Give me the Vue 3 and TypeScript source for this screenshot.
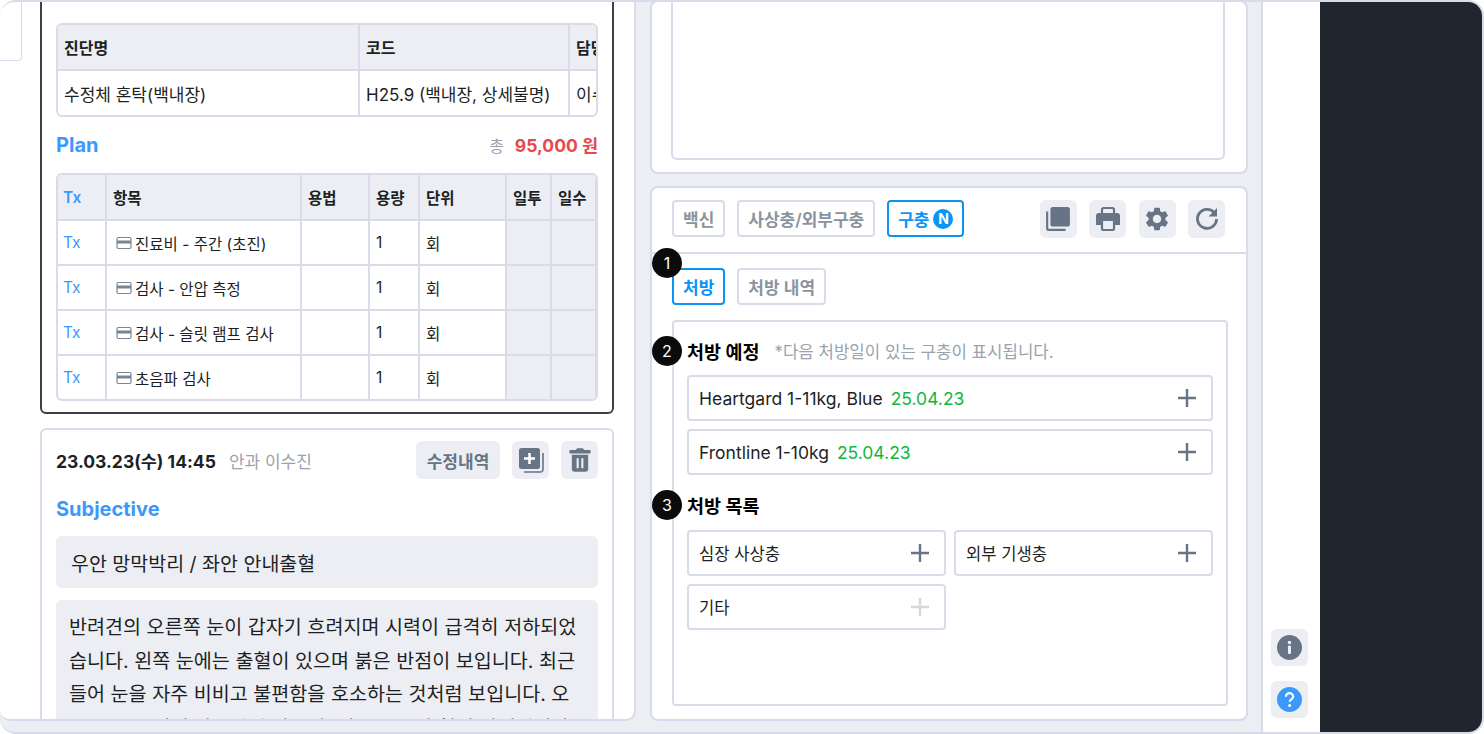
<script setup lang="ts">
const planRows = [
  '진료비 - 주간 (초진)',
  '검사 - 안압 측정',
  '검사 - 슬릿 램프 검사',
  '초음파 검사'
]

const scheduled = [
  { name: 'Heartgard 1-11kg, Blue', date: '25.04.23' },
  { name: 'Frontline 1-10kg', date: '25.04.23' }
]

const catalog = [
  { name: '심장 사상충', off: false },
  { name: '외부 기생충', off: false },
  { name: '기타', off: true }
]
</script>

<template>
  <div class="frame">
    <section class="left-panel">
      <div class="sliver"></div>
      <div class="left-scroll">
        <article class="record active">
          <h3 class="soap-title">Assessment</h3>
          <div class="table-wrap">
            <table class="diag">
              <colgroup>
                <col style="width: 301px" />
                <col style="width: 210px" />
                <col style="width: 80px" />
              </colgroup>
              <thead>
                <tr><th>진단명</th><th>코드</th><th>담당의</th></tr>
              </thead>
              <tbody>
                <tr><td>수정체 혼탁(백내장)</td><td>H25.9 (백내장, 상세불명)</td><td>이수진</td></tr>
              </tbody>
            </table>
          </div>
          <div class="plan-head">
            <h3 class="soap-title">Plan</h3>
            <div class="total"><span class="total-label">총</span><b>95,000 원</b></div>
          </div>
          <div class="table-wrap">
            <table class="plan">
              <colgroup>
                <col style="width: 48px" />
                <col style="width: 195px" />
                <col style="width: 68px" />
                <col style="width: 50px" />
                <col style="width: 87px" />
                <col style="width: 45px" />
                <col style="width: 45px" />
                <col style="width: 4px" />
              </colgroup>
              <thead>
                <tr>
                  <th class="tx">Tx</th><th>항목</th><th>용법</th><th>용량</th>
                  <th>단위</th><th>일투</th><th>일수</th><th></th>
                </tr>
              </thead>
              <tbody>
                <tr v-for="row in planRows" :key="row">
                  <td class="tx">Tx</td>
                  <td>
                    <span class="item">
                      <svg class="item-icon" viewBox="0 0 16 14" width="16" height="14">
                        <rect x="1" y="1.5" width="14" height="11" rx="1.5" fill="none" stroke="#7a8594" stroke-width="1.2" />
                        <path d="M1 4.500h14v3H1z" fill="#7a8594" />
                      </svg>
                      {{ row }}
                    </span>
                  </td>
                  <td></td>
                  <td>1</td>
                  <td>회</td>
                  <td class="shade"></td>
                  <td class="shade"></td>
                  <td class="shade"></td>
                </tr>
              </tbody>
            </table>
          </div>
        </article>

        <article class="record">
          <div class="record-head">
            <strong class="record-date">23.03.23(수) 14:45</strong>
            <span class="record-dept">안과 이수진</span>
            <button class="text-btn">수정내역</button>
            <button class="icon-btn">
              <svg viewBox="0 0 28 28" width="28" height="28">
                <rect x="2" y="2" width="21" height="21" rx="2.5" fill="#667485" />
                <path d="M12.5 7v11M7 12.5h11" stroke="#fff" stroke-width="2.6" />
                <path d="M26 7v16.5a2.5 2.5 0 0 1-2.5 2.5H7" fill="none" stroke="#667485" stroke-width="1.6" />
              </svg>
            </button>
            <button class="icon-btn">
              <svg viewBox="0 0 24 24" width="28" height="28">
                <path d="M3 3.500h5.500l1-1.500h5l1 1.500H21V6.500H3z" fill="#667485" />
                <path d="M5 7.500h14V20a2 2 0 0 1-2 2H7a2 2 0 0 1-2-2z" fill="#667485" />
                <path d="M10 10.500v8.500M14 10.500v8.500" stroke="#eceef3" stroke-width="1.8" />
              </svg>
            </button>
          </div>
          <h3 class="soap-title subjective">Subjective</h3>
          <div class="summary">우안 망막박리 / 좌안 안내출혈</div>
          <p class="note">반려견의 오른쪽 눈이 갑자기 흐려지며 시력이 급격히 저하되었습니다. 왼쪽 눈에는 출혈이 있으며 붉은 반점이 보입니다. 최근 들어 눈을 자주 비비고 불편함을 호소하는 것처럼 보입니다. 오른쪽 눈은 빛에 반응하지 않으며, 왼쪽 눈은 충혈된 상태입니다.</p>
        </article>
      </div>
    </section>

    <div class="right-col">
      <section class="card memo-card">
        <div class="memo"></div>
      </section>

      <section class="card rx-card">
        <div class="rx-top">
          <button class="tab">백신</button>
          <button class="tab">사상충/외부구충</button>
          <button class="tab on">구충<span class="new-badge">N</span></button>
          <div class="rx-tools">
            <button class="icon-btn">
              <svg viewBox="0 0 24 24" width="26" height="26">
                <path d="M3 5H1v16c0 1.100.9 2 2 2h16v-2H3V5zm18-4H7c-1.100 0-2 .9-2 2v14c0 1.100.9 2 2 2h14c1.100 0 2-.9 2-2V3c0-1.100-.9-2-2-2z" fill="#667485" />
              </svg>
            </button>
            <button class="icon-btn">
              <svg viewBox="0 0 28 28" width="28" height="28">
                <path d="M8 9V4.500A1.500 1.500 0 0 1 9.500 3h9A1.500 1.500 0 0 1 20 4.500V9" fill="none" stroke="#667485" stroke-width="2.200" />
                <path d="M5 8h18a3 3 0 0 1 3 3v9h-5v-5H7v5H2v-9a3 3 0 0 1 3-3z" fill="#667485" />
                <rect x="8" y="15" width="12" height="10" rx="1" fill="none" stroke="#667485" stroke-width="2.200" />
              </svg>
            </button>
            <button class="icon-btn">
              <svg viewBox="0 0 24 24" width="28" height="28">
                <path fill="#667485" d="M19.140 12.940c.04-.3.06-.61.06-.94 0-.32-.02-.64-.07-.94l2.030-1.580c.18-.14.23-.41.12-.61l-1.920-3.320c-.12-.22-.37-.29-.59-.22l-2.390.96c-.5-.38-1.030-.7-1.620-.94l-.36-2.540c-.04-.24-.24-.41-.48-.41h-3.840c-.24 0-.43.17-.47.41l-.36 2.540c-.59.24-1.130.57-1.620.94l-2.390-.96c-.22-.08-.47 0-.59.22L2.740 8.870c-.12.21-.08.47.12.61l2.030 1.580c-.05.3-.09.63-.09.94s.02.64.07.94l-2.030 1.580c-.18.14-.23.41-.12.61l1.920 3.320c.12.22.37.29.59.22l2.390-.96c.5.38 1.030.7 1.620.94l.36 2.540c.05.24.24.41.48.41h3.840c.24 0 .44-.17.47-.41l.36-2.540c.59-.24 1.130-.56 1.620-.94l2.390.96c.22.08.47 0 .59-.22l1.920-3.320c.12-.22.07-.47-.12-.61l-2.010-1.580zM12 15.600c-1.980 0-3.600-1.620-3.600-3.600s1.620-3.600 3.600-3.600 3.600 1.620 3.600 3.600-1.620 3.600-3.600 3.600z" />
              </svg>
            </button>
            <button class="icon-btn">
              <svg viewBox="0 0 28 28" width="28" height="28">
                <path d="M21.500 8A9.500 9.500 0 1 0 23.500 14" fill="none" stroke="#667485" stroke-width="2.800" />
                <path d="M24 3v8.500h-8.500z" fill="#667485" />
              </svg>
            </button>
          </div>
        </div>

        <div class="rx-body">
          <span class="step step-1">1</span>
          <div class="sub-tabs">
            <button class="tab on">처방</button>
            <button class="tab">처방 내역</button>
          </div>
          <div class="rx-box">
            <div class="rx-title">
              <span class="step step-2">2</span>
              <strong>처방 예정</strong>
              <span class="rx-hint">*다음 처방일이 있는 구충이 표시됩니다.</span>
            </div>
            <div class="rx-list">
              <div v-for="item in scheduled" :key="item.name" class="rx-row">
                <span>{{ item.name }}</span>
                <span class="rx-date">{{ item.date }}</span>
                <svg class="plus" viewBox="0 0 18 18" width="18" height="18"><path d="M9 0v18M0 9h18" stroke="#667485" stroke-width="2.400" /></svg>
              </div>
            </div>
            <div class="rx-title second">
              <span class="step step-3">3</span>
              <strong>처방 목록</strong>
            </div>
            <div class="rx-grid">
              <div v-for="item in catalog" :key="item.name" class="rx-row">
                <span>{{ item.name }}</span>
                <svg class="plus" viewBox="0 0 18 18" width="18" height="18"><path d="M9 0v18M0 9h18" :stroke="item.off ? '#d3d8dd' : '#667485'" stroke-width="2.400" /></svg>
              </div>
            </div>
          </div>
        </div>
      </section>
    </div>

    <aside class="side">
      <button class="icon-btn">
        <svg viewBox="0 0 25 25" width="25" height="25">
          <circle cx="12.500" cy="12.500" r="12.500" fill="#667485" />
          <circle cx="12.500" cy="7.500" r="1.800" fill="#eceef3" />
          <rect x="11" y="10.500" width="3" height="8.500" rx="1" fill="#eceef3" />
        </svg>
      </button>
      <button class="icon-btn">
        <svg viewBox="0 0 25 25" width="25" height="25">
          <circle cx="12.500" cy="12.500" r="12.500" fill="#3b99fc" />
          <path d="M8.800 9.800a3.700 3.700 0 0 1 7.400 0c0 2.600-3.500 2.700-3.500 5" fill="none" stroke="#fff" stroke-width="2.200" />
          <circle cx="12.600" cy="18.500" r="1.500" fill="#fff" />
        </svg>
      </button>
    </aside>

    <div class="dark"></div>
  </div>
</template>

<style scoped>
.frame {
  box-sizing: border-box;
  width: 1484px;
  height: 734px;
  display: flex;
  background: #eceef3;
  border: 1px solid #d9dbe8;
  border-width: 2px 2px 2px 0;
  border-radius: 16px;
  overflow: hidden;
  font-family: Inter, "Noto Sans CJK KR", sans-serif;
  color: #1c1f24;
}

button {
  font-family: inherit;
  cursor: pointer;
}

.left-panel {
  box-sizing: border-box;
  width: 636px;
  height: 719px;
  flex: none;
  display: flex;
  background: #fff;
  border-right: 2px solid #d9dbe8;
  border-bottom: 2px solid #d9dbe8;
  border-radius: 0 0 10px 10px;
  overflow: hidden;
}

.sliver {
  box-sizing: border-box;
  width: 22px;
  height: 59px;
  flex: none;
  margin-right: 18px;
  border: 1px solid #d9dbe8;
  border-top: 0;
  border-left: 0;
  border-radius: 0 0 4px 0;
}

.left-scroll {
  width: 574px;
  flex: none;
  display: flex;
  flex-direction: column;
  gap: 14px;
  margin-top: -41px;
}

.record {
  box-sizing: border-box;
  flex: none;
  padding: 0 14px;
  border: 2px solid #d9dbe8;
  border-radius: 6px;
}

.record.active {
  height: 453px;
  padding-top: 20px;
  border: 2px solid #3d3f42;
}

.soap-title {
  margin: 0;
  font-size: 20px;
  line-height: 24px;
  font-weight: 700;
  color: #3b99fc;
}

.table-wrap {
  margin-top: 16px;
  border: 2px solid #d9dbe8;
  border-radius: 6px;
  overflow: hidden;
}

table {
  table-layout: fixed;
  border-collapse: collapse;
  font-size: 17px;
}

.diag {
  width: 591px;
}

.plan {
  width: 543px;
  font-size: 15.500px;
}

th,
td {
  padding: 0 6px;
  border: 2px solid #d9dbe8;
  text-align: left;
  white-space: nowrap;
  overflow: hidden;
}

tr > :first-child {
  border-left: 0;
}

thead tr > * {
  border-top: 0;
}

tbody tr:last-child td {
  border-bottom: 0;
}

th {
  background: #eceef3;
  font-size: 16px;
  font-weight: 700;
  height: 44px;
}

.diag td {
  height: 44px;
}

.plan td {
  height: 43px;
}

.plan th {
  font-size: 15.500px;
  font-weight: 600;
}

.plan .tx {
  padding-left: 5px;
  color: #3b99fc;
}

.shade {
  background: #eceef3;
}

.item {
  display: flex;
  align-items: center;
  gap: 3px;
  margin-left: 3px;
}

.item-icon {
  flex: none;
}

.plan-head {
  display: flex;
  justify-content: space-between;
  align-items: center;
  margin-top: 15px;
}

.plan-head + .table-wrap {
  margin-top: 16px;
}

.total {
  display: flex;
  align-items: center;
  gap: 11px;
  font-size: 17.500px;
}

.total-label {
  color: #9aa3ad;
  font-size: 16px;
}

.total b {
  color: #e5484d;
  font-weight: 700;
}

.record-head {
  display: flex;
  align-items: center;
  margin-top: 11px;
  height: 38px;
}

.record-date {
  font-size: 17.500px;
  font-weight: 700;
}

.record-dept {
  margin-left: 13px;
  flex: 1;
  font-size: 17px;
  color: #9aa3ad;
}

.text-btn {
  width: 84px;
  height: 38px;
  padding: 0;
  border: 0;
  border-radius: 6px;
  background: #eceef3;
  color: #667485;
  font-size: 17px;
  font-weight: 600;
}

.icon-btn {
  width: 37px;
  height: 38px;
  padding: 0;
  flex: none;
  display: flex;
  align-items: center;
  justify-content: center;
  border: 0;
  border-radius: 6px;
  background: #eceef3;
}

.record-head .icon-btn {
  margin-left: 12px;
}

.subjective {
  margin-top: 18px;
}

.summary {
  margin-top: 15px;
  height: 52px;
  padding: 0 15px;
  display: flex;
  align-items: center;
  border-radius: 6px;
  background: #eceef3;
  font-size: 19.500px;
}

.note {
  margin: 12px 0 0;
  padding: 11px 13px;
  border-radius: 6px;
  background: #eceef3;
  font-size: 19.600px;
  line-height: 33.500px;
}

.right-col {
  width: 598px;
  flex: none;
  display: flex;
  flex-direction: column;
  gap: 12px;
  margin-left: 14px;
  margin-right: 13px;
  height: 719px;
}

.card {
  box-sizing: border-box;
  background: #fff;
  border: 2px solid #d9dbe8;
  border-radius: 8px;
}

.memo-card {
  height: 174px;
  flex: none;
  margin-top: -2px;
  padding: 0 21px 12px 19px;
  display: flex;
}

.memo {
  flex: 1;
  border: 2px solid #d9dbe8;
  border-top: 0;
  border-radius: 0 0 6px 6px;
}

.rx-card {
  flex: 1;
  position: relative;
}

.rx-top {
  height: 66px;
  box-sizing: border-box;
  padding: 12px 21px 0 20px;
  display: flex;
  align-items: flex-start;
  gap: 12px;
  border-bottom: 2px solid #d9dbe8;
}

.rx-tools {
  margin-left: auto;
  display: flex;
  gap: 12.500px;
}

.tab {
  height: 37px;
  padding: 0 9px;
  display: inline-flex;
  align-items: center;
  border: 2px solid #d9dbe8;
  border-radius: 4px;
  background: #fff;
  color: #8b949e;
  font-size: 17px;
  font-weight: 600;
}

.tab.on {
  border-color: #0a95f5;
  color: #0a95f5;
}

.new-badge {
  width: 20px;
  height: 20px;
  margin-left: 4px;
  display: inline-flex;
  align-items: center;
  justify-content: center;
  border-radius: 50%;
  background: #0a95f5;
  color: #fff;
  font-size: 14px;
  font-weight: 700;
}

.rx-body {
  position: relative;
  padding: 14px 0 0 20px;
}

.sub-tabs {
  display: flex;
  gap: 12px;
}

.rx-box {
  box-sizing: border-box;
  width: 556px;
  height: 386px;
  margin-top: 15px;
  padding: 19px 13px 0;
  border: 2px solid #d9dbe8;
  border-radius: 4px;
}

.rx-title {
  position: relative;
  height: 20px;
  display: flex;
  align-items: center;
  gap: 15px;
  font-size: 18.500px;
  color: #000;
}

.rx-title strong {
  font-weight: 700;
}

.rx-title.second {
  margin-top: 20px;
}

.rx-hint {
  font-size: 16.800px;
  color: #9aa3ad;
}

.step {
  position: absolute;
  width: 30px;
  height: 30px;
  display: flex;
  align-items: center;
  justify-content: center;
  border-radius: 50%;
  background: #0b0b0c;
  color: #fff;
  font-size: 16px;
  font-weight: 400;
  z-index: 1;
}

.step-1 {
  left: 0;
  top: -6px;
}

.step-2,
.step-3 {
  left: -35px;
  top: -5px;
}

.rx-list {
  margin-top: 14px;
  display: flex;
  flex-direction: column;
  gap: 8px;
}

.rx-grid {
  margin-top: 15px;
  display: grid;
  grid-template-columns: 1fr 1fr;
  gap: 8px;
}

.rx-row {
  box-sizing: border-box;
  height: 46px;
  padding: 0 15px 0 10px;
  display: flex;
  align-items: center;
  gap: 8px;
  border: 2px solid #d9dbe8;
  border-radius: 4px;
  font-size: 16.600px;
}

.rx-list .rx-row {
  font-size: 17.500px;
}

.rx-date {
  color: #0fb83c;
}

.plus {
  margin-left: auto;
  flex: none;
}

.side {
  box-sizing: border-box;
  width: 59px;
  height: 732px;
  flex: none;
  padding: 0 11px 16px 8px;
  display: flex;
  flex-direction: column;
  justify-content: flex-end;
  gap: 15px;
  background: #fff;
  border-left: 2px solid #d9dbe8;
}

.side .icon-btn {
  height: 37px;
}

.dark {
  flex: 1;
  background: #20252e;
}
</style>

<style>
html,
body {
  margin: 0;
  background: #fff;
  overflow: hidden;
}
</style>
